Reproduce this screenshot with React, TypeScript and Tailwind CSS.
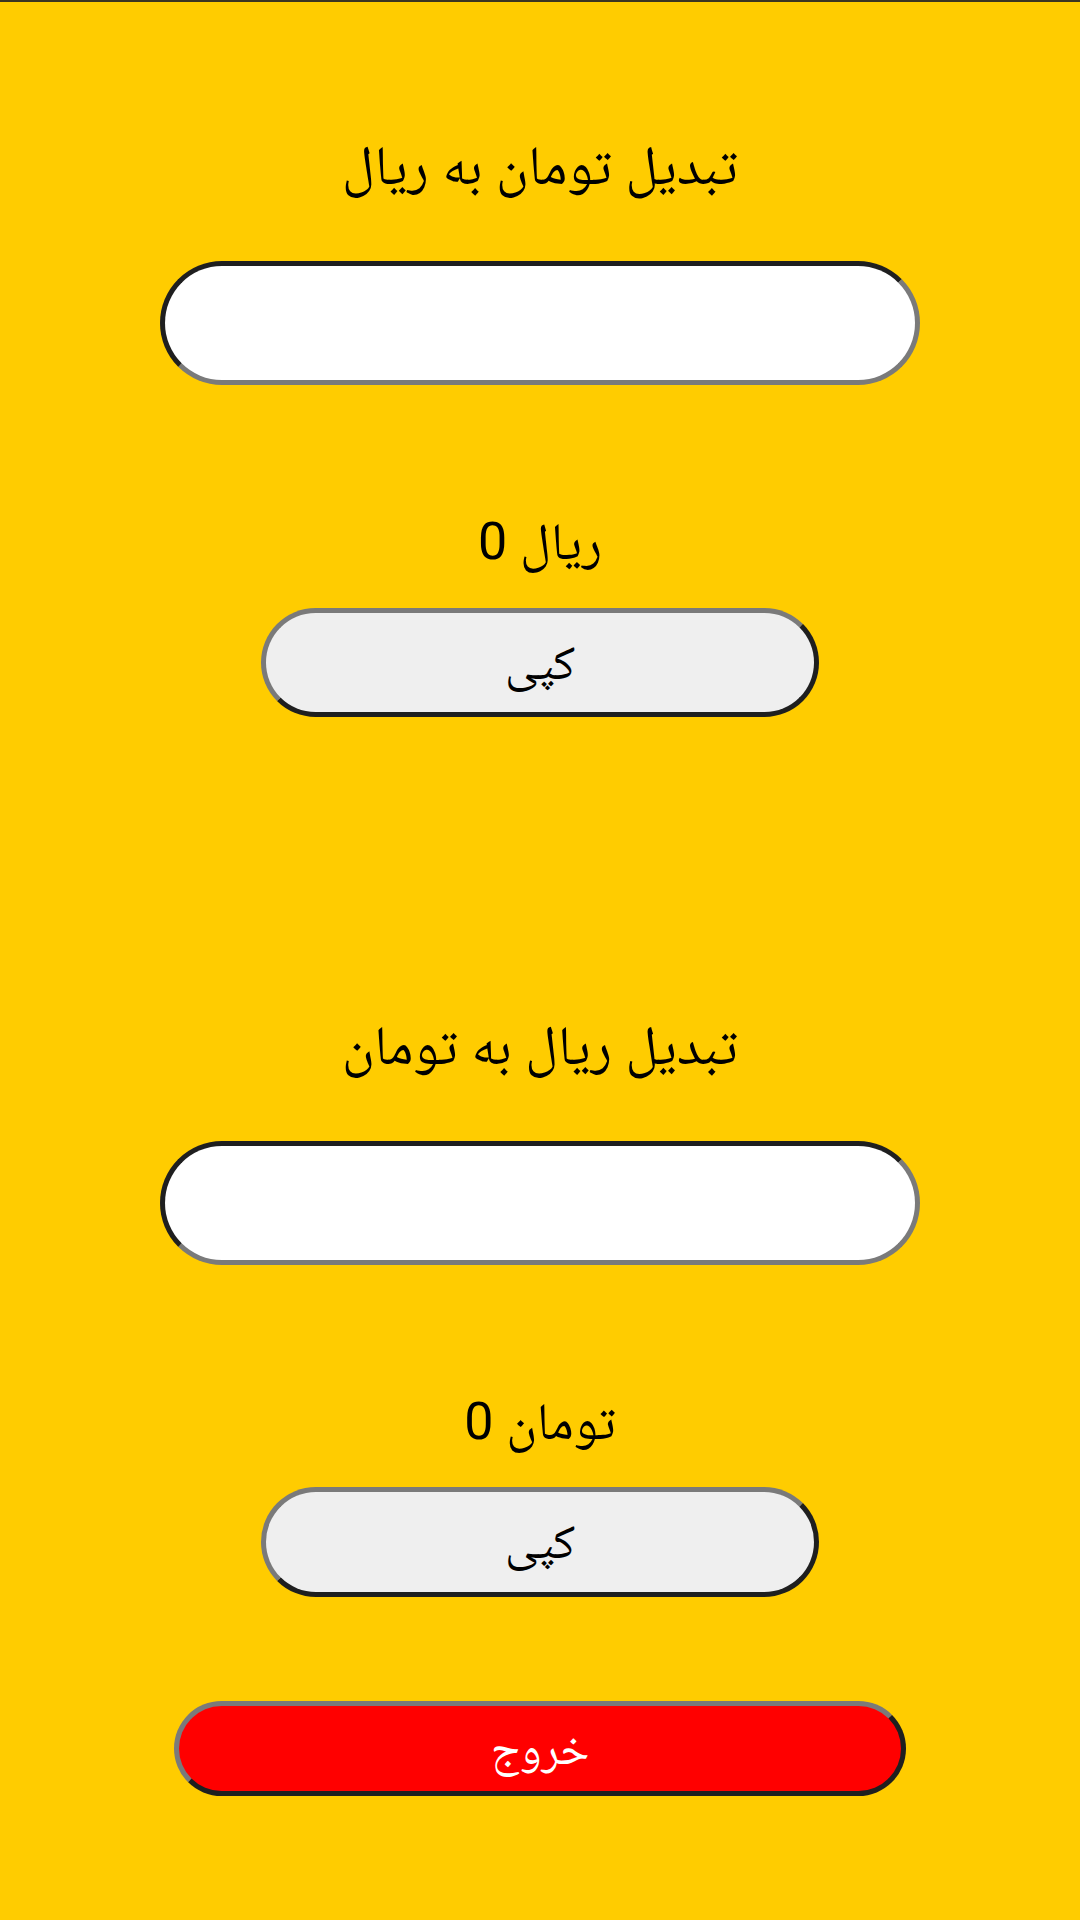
import { useState } from "react";

const font = {
  fontFamily:
    'Roboto, "Noto Naskh Arabic", "Noto Sans Arabic", "DejaVu Sans", sans-serif',
};

export default function App() {
  const [toman, setToman] = useState("");
  const [rial, setRial] = useState("");

  const rialResult = (Number(toman) || 0) * 10;
  const tomanResult = (Number(rial) || 0) / 10;

  return (
    <div
      style={font}
      className="w-[1080px] h-[1920px] bg-[#ffcc00] border-t-2 border-[#3b3522] flex flex-col items-center text-black"
    >
      {/* Toman -> Rial */}
      <h1 className="mt-[133px] h-[60px] leading-[60px] text-[55px] font-normal">
        تبدیل تومان به ریال
      </h1>
      <input
        dir="rtl"
        value={toman}
        onChange={(e) => setToman(e.target.value)}
        className="mt-[66px] w-[760px] h-[124px] rounded-full bg-white border-[5px] border-t-[#1f1f1f] border-l-[#1f1f1f] border-r-[#7a7a7a] border-b-[#7a7a7a] outline-none px-10 text-[40px] text-center"
      />
      <p className="mt-[129px] h-[56px] leading-[56px] text-[52px]">
        {rialResult} ریال
      </p>
      <button className="mt-[38px] w-[558px] h-[109px] rounded-full bg-[#efefef] border-[5px] border-t-[#7a7a7a] border-l-[#7a7a7a] border-r-[#1f1f1f] border-b-[#1f1f1f] text-[48px]">
        کپی
      </button>

      {/* Rial -> Toman */}
      <h1 className="mt-[298px] h-[60px] leading-[60px] text-[55px] font-normal">
        تبدیل ریال به تومان
      </h1>
      <input
        dir="rtl"
        value={rial}
        onChange={(e) => setRial(e.target.value)}
        className="mt-[66px] w-[760px] h-[124px] rounded-full bg-white border-[5px] border-t-[#1f1f1f] border-l-[#1f1f1f] border-r-[#7a7a7a] border-b-[#7a7a7a] outline-none px-10 text-[40px] text-center"
      />
      <p className="mt-[129px] h-[56px] leading-[56px] text-[52px]">
        {tomanResult} تومان
      </p>
      <button className="mt-[37px] w-[558px] h-[110px] rounded-full bg-[#efefef] border-[5px] border-t-[#7a7a7a] border-l-[#7a7a7a] border-r-[#1f1f1f] border-b-[#1f1f1f] text-[48px]">
        کپی
      </button>

      {/* Exit */}
      <button className="mt-[104px] w-[732px] h-[95px] rounded-full bg-[#ff0000] border-[5px] border-t-[#7a7a7a] border-l-[#7a7a7a] border-r-[#1f1f1f] border-b-[#1f1f1f] text-white text-[46px]">
        خروج
      </button>
    </div>
  );
}
